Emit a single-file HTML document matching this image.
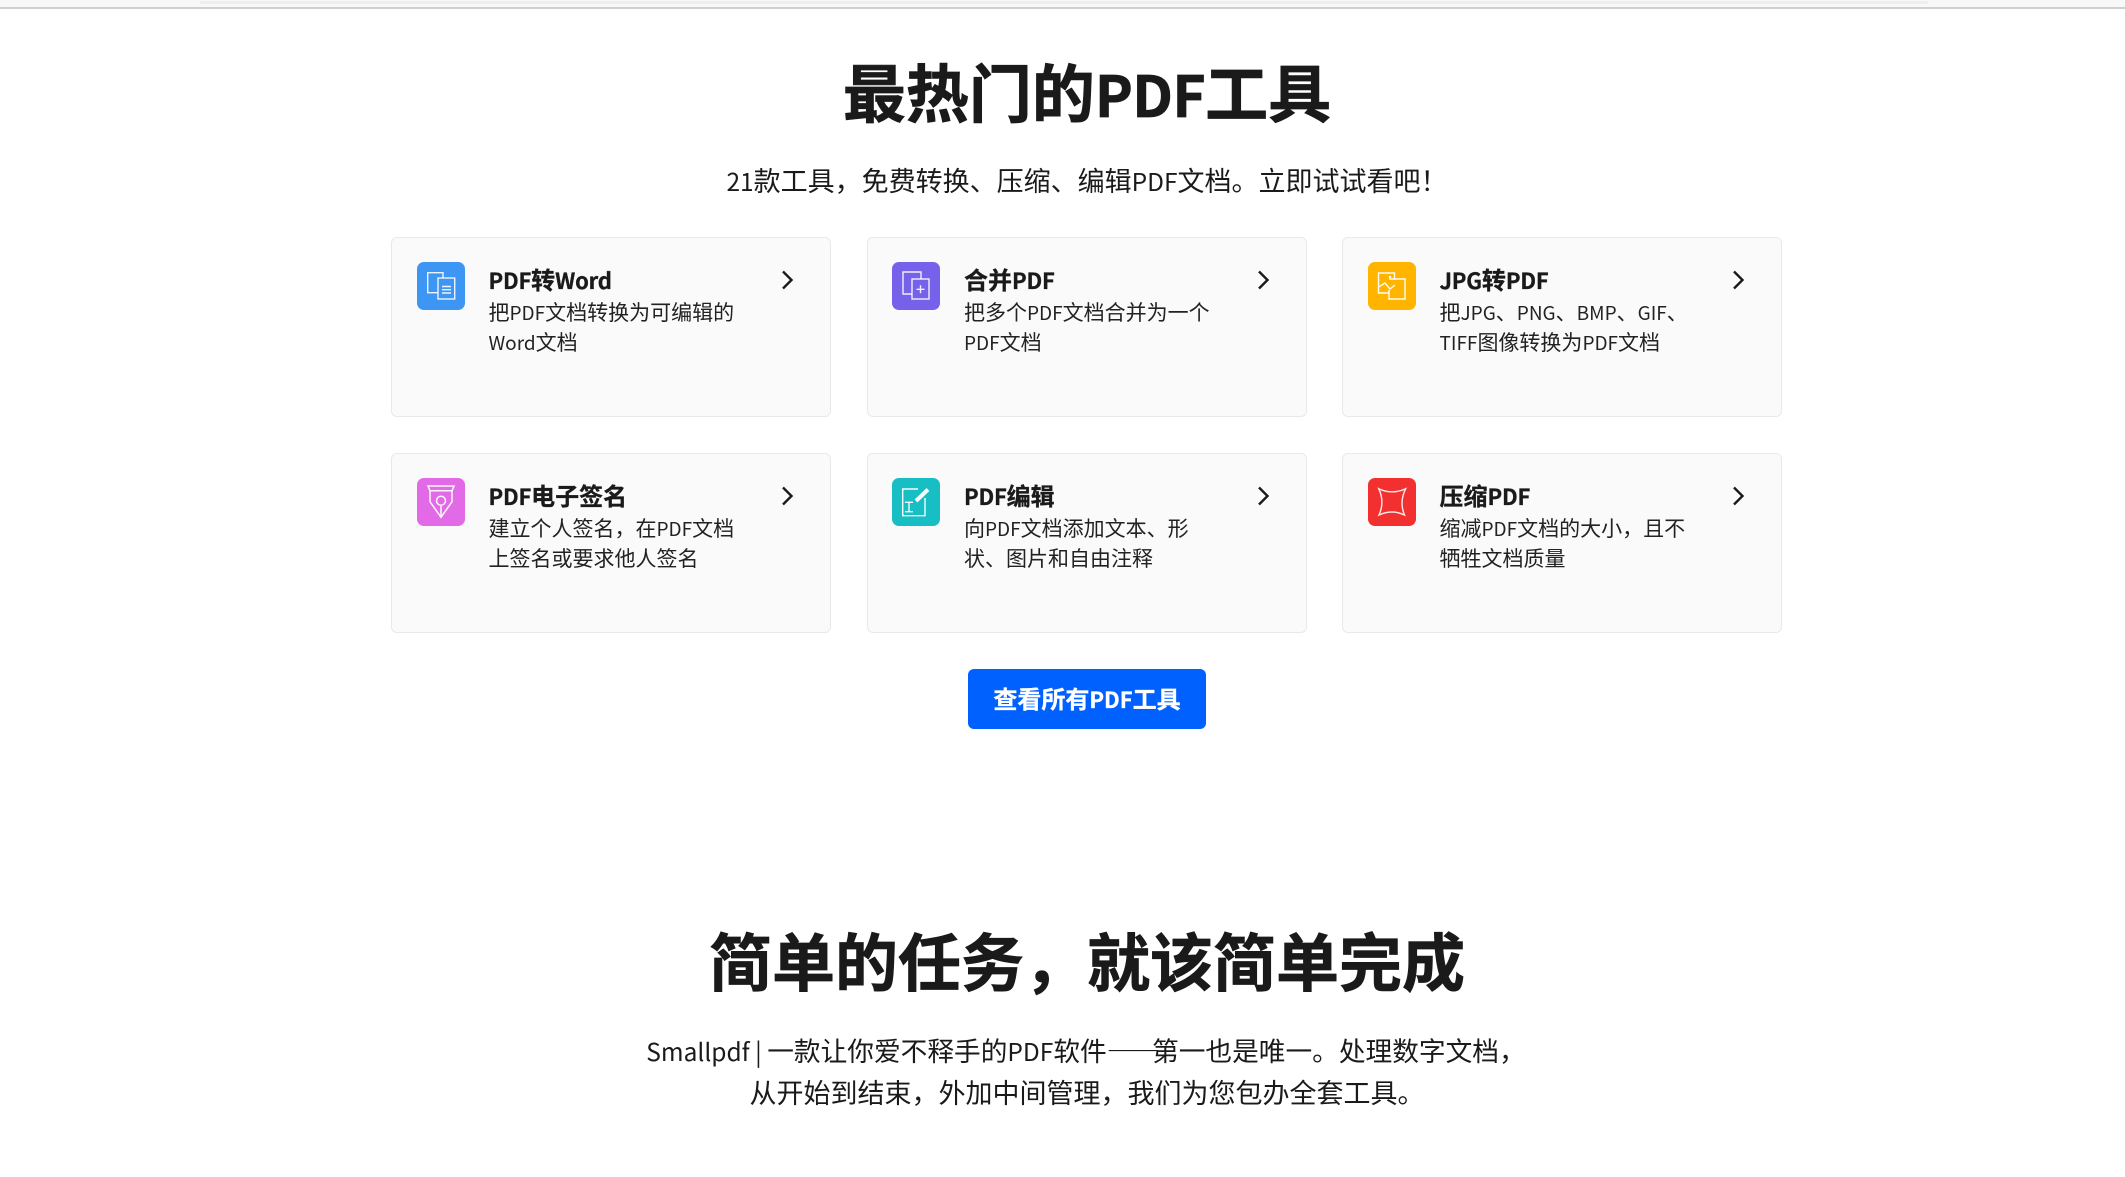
<!DOCTYPE html>
<html lang="zh-CN">
<head>
<meta charset="utf-8">
<title>最热门的PDF工具</title>
<style>
html,body{margin:0;padding:0;background:#fff}
body{position:relative;width:2125px;height:1177px;overflow:hidden;color:#1a1a1a;
font-family:"Noto Sans CJK SC","Liberation Sans",sans-serif}
i{font-style:normal}
.abs{position:absolute}
.center{position:absolute;left:587px;width:1000px;text-align:center;white-space:nowrap}
h1{margin:0;font-size:63px;line-height:80px;font-weight:700;-webkit-text-stroke:.7px #1a1a1a}
h1 i{font-size:57px;letter-spacing:-.6px}
.sub{font-size:27px;line-height:42px;font-weight:400}
.sub i{font-size:24.5px}
.sub b{font-weight:400;letter-spacing:-8px}
.card{position:absolute;width:438px;height:178px;background:#fafafb;border:1px solid #e9e9e9;border-radius:6px}
.ico{position:absolute;left:25px;top:24px;width:48px;height:48px;border-radius:7px}
.ico svg{display:block}
.t{position:absolute;left:96.5px;top:26px;font-size:24px;line-height:30px;font-weight:700;white-space:nowrap;-webkit-text-stroke:.3px #1a1a1a}
.t i{font-size:22px;letter-spacing:-.2px}
.d{position:absolute;left:96.5px;top:60px;font-size:21px;line-height:29.5px;font-weight:400;white-space:nowrap;color:#222}
.d i{font-size:19px}
.ch{position:absolute;left:388px;top:32px}
.btn{position:absolute;left:968px;top:669px;width:238px;height:60px;background:#0061fe;border-radius:6px;color:#fff;font-size:24px;font-weight:700;line-height:58px;text-align:center;white-space:nowrap;-webkit-text-stroke:.3px #fff}
.btn i{font-size:22px}
.c2 .ico{left:24px}
.c2 .t,.c2 .d{left:96px}
</style>
</head>
<body>
<div class="abs" style="left:0;top:0;width:2125px;height:7px;background:#f8f8f8"></div>
<div class="abs" style="left:200px;top:1px;width:1728px;height:3px;background:#eeeeee"></div>
<div class="abs" style="left:0;top:7px;width:2125px;height:2px;background:#cfcfcf"></div>

<h1 class="center" style="top:51px">最热门的<i>PDF</i>工具</h1>
<div class="center sub" style="top:159px"><i>21</i>款工具，免费转换、压缩、编辑<i>PDF</i>文档。立即试试看吧！</div>

<div class="card" style="left:391px;top:237px">
  <div class="ico" style="background:#3e96f4"><svg width="48" height="48" viewBox="0 0 48 48" fill="none" stroke="#fff" stroke-opacity=".9" stroke-width="1.4"><path d="M21 30.7H10.7V10.7H26V16"/><rect x="21" y="16" width="16.7" height="21"/><path d="M25 24.5h9M25 27.7h9M25 31h9"/></svg></div>
  <div class="t"><i>PDF</i>转<i>Word</i></div>
  <div class="d">把<i>PDF</i>文档转换为可编辑的<br><i>Word</i>文档</div>
  <svg class="ch" width="14" height="20" viewBox="0 0 14 20" fill="none" stroke="#1a1a1a" stroke-width="2.4"><path d="M3 1.5l8.5 8.5-8.5 8.5"/></svg>
</div>

<div class="card c2" style="left:867px;top:237px">
  <div class="ico" style="background:#7561ea"><svg width="48" height="48" viewBox="0 0 48 48" fill="none" stroke="#fff" stroke-opacity=".9" stroke-width="1.4"><path d="M20 32H11V10h18v7"/><rect x="20" y="17" width="17" height="20"/><path d="M28.5 23.3v8M24.5 27.3h8"/></svg></div>
  <div class="t">合并<i>PDF</i></div>
  <div class="d">把多个<i>PDF</i>文档合并为一个<br><i>PDF</i>文档</div>
  <svg class="ch" width="14" height="20" viewBox="0 0 14 20" fill="none" stroke="#1a1a1a" stroke-width="2.4"><path d="M3 1.5l8.5 8.5-8.5 8.5"/></svg>
</div>

<div class="card" style="left:1342px;top:237px">
  <div class="ico" style="background:#ffb400"><svg width="48" height="48" viewBox="0 0 48 48" fill="none" stroke="#fff" stroke-opacity=".95" stroke-width="1.4"><path d="M21 31H10.5V11H26.5V17"/><path d="M21 17H37V37H21V28"/><path d="M10.5 25L17 21l5 6 5-4"/><circle cx="22" cy="15" r="1.2" fill="#fff" stroke="none"/></svg></div>
  <div class="t"><i>JPG</i>转<i>PDF</i></div>
  <div class="d">把<i>JPG</i>、<i>PNG</i>、<i>BMP</i>、<i>GIF</i>、<br><i>TIFF</i>图像转换为<i>PDF</i>文档</div>
  <svg class="ch" width="14" height="20" viewBox="0 0 14 20" fill="none" stroke="#1a1a1a" stroke-width="2.4"><path d="M3 1.5l8.5 8.5-8.5 8.5"/></svg>
</div>

<div class="card" style="left:391px;top:453px">
  <div class="ico" style="background:#e36ae6"><svg width="48" height="48" viewBox="0 0 48 48" fill="none" stroke="#fff" stroke-opacity=".95" stroke-width="1.5"><path d="M11 8H37L35 12.7H13Z"/><path d="M13 12.7V23.7L24 39.3L35 23.7V12.7"/><circle cx="24" cy="22.7" r="4.5"/><path d="M24 27.2V38"/></svg></div>
  <div class="t"><i>PDF</i>电子签名</div>
  <div class="d">建立个人签名，在<i>PDF</i>文档<br>上签名或要求他人签名</div>
  <svg class="ch" width="14" height="20" viewBox="0 0 14 20" fill="none" stroke="#1a1a1a" stroke-width="2.4"><path d="M3 1.5l8.5 8.5-8.5 8.5"/></svg>
</div>

<div class="card c2" style="left:867px;top:453px">
  <div class="ico" style="background:#17bfc5"><svg width="48" height="48" viewBox="0 0 48 48" fill="none" stroke="#fff" stroke-opacity=".95" stroke-width="1.4"><path d="M26 11H10.7V37.7H33V20"/><path d="M13 24.3h8M13 33.7h8M17 24.3v9.4"/><path d="M24 23L36 11.5" stroke-width="4"/></svg></div>
  <div class="t"><i>PDF</i>编辑</div>
  <div class="d">向<i>PDF</i>文档添加文本、形<br>状、图片和自由注释</div>
  <svg class="ch" width="14" height="20" viewBox="0 0 14 20" fill="none" stroke="#1a1a1a" stroke-width="2.4"><path d="M3 1.5l8.5 8.5-8.5 8.5"/></svg>
</div>

<div class="card" style="left:1342px;top:453px">
  <div class="ico" style="background:#f23030"><svg width="48" height="48" viewBox="0 0 48 48" fill="none" stroke="#fff" stroke-opacity=".9" stroke-width="1.4"><path d="M10.7 10.7Q24 17 37.7 10.7Q31 24 36.5 37Q24 31 11 37Q17 24 10.7 10.7Z"/></svg></div>
  <div class="t">压缩<i>PDF</i></div>
  <div class="d">缩减<i>PDF</i>文档的大小，且不<br>牺牲文档质量</div>
  <svg class="ch" width="14" height="20" viewBox="0 0 14 20" fill="none" stroke="#1a1a1a" stroke-width="2.4"><path d="M3 1.5l8.5 8.5-8.5 8.5"/></svg>
</div>

<div class="btn">查看所有<i>PDF</i>工具</div>

<h1 class="center" style="top:920px">简单的任务，就该简单完成</h1>
<div class="center sub" style="top:1029px;left:586px;font-size:26.7px"><i>Smallpdf | </i>一款让你爱不释手的<i>PDF</i>软件<b>——</b>第一也是唯一。处理数字文档，</div>
<div class="center sub" style="top:1071px">从开始到结束，外加中间管理，我们为您包办全套工具。</div>
</body>
</html>
